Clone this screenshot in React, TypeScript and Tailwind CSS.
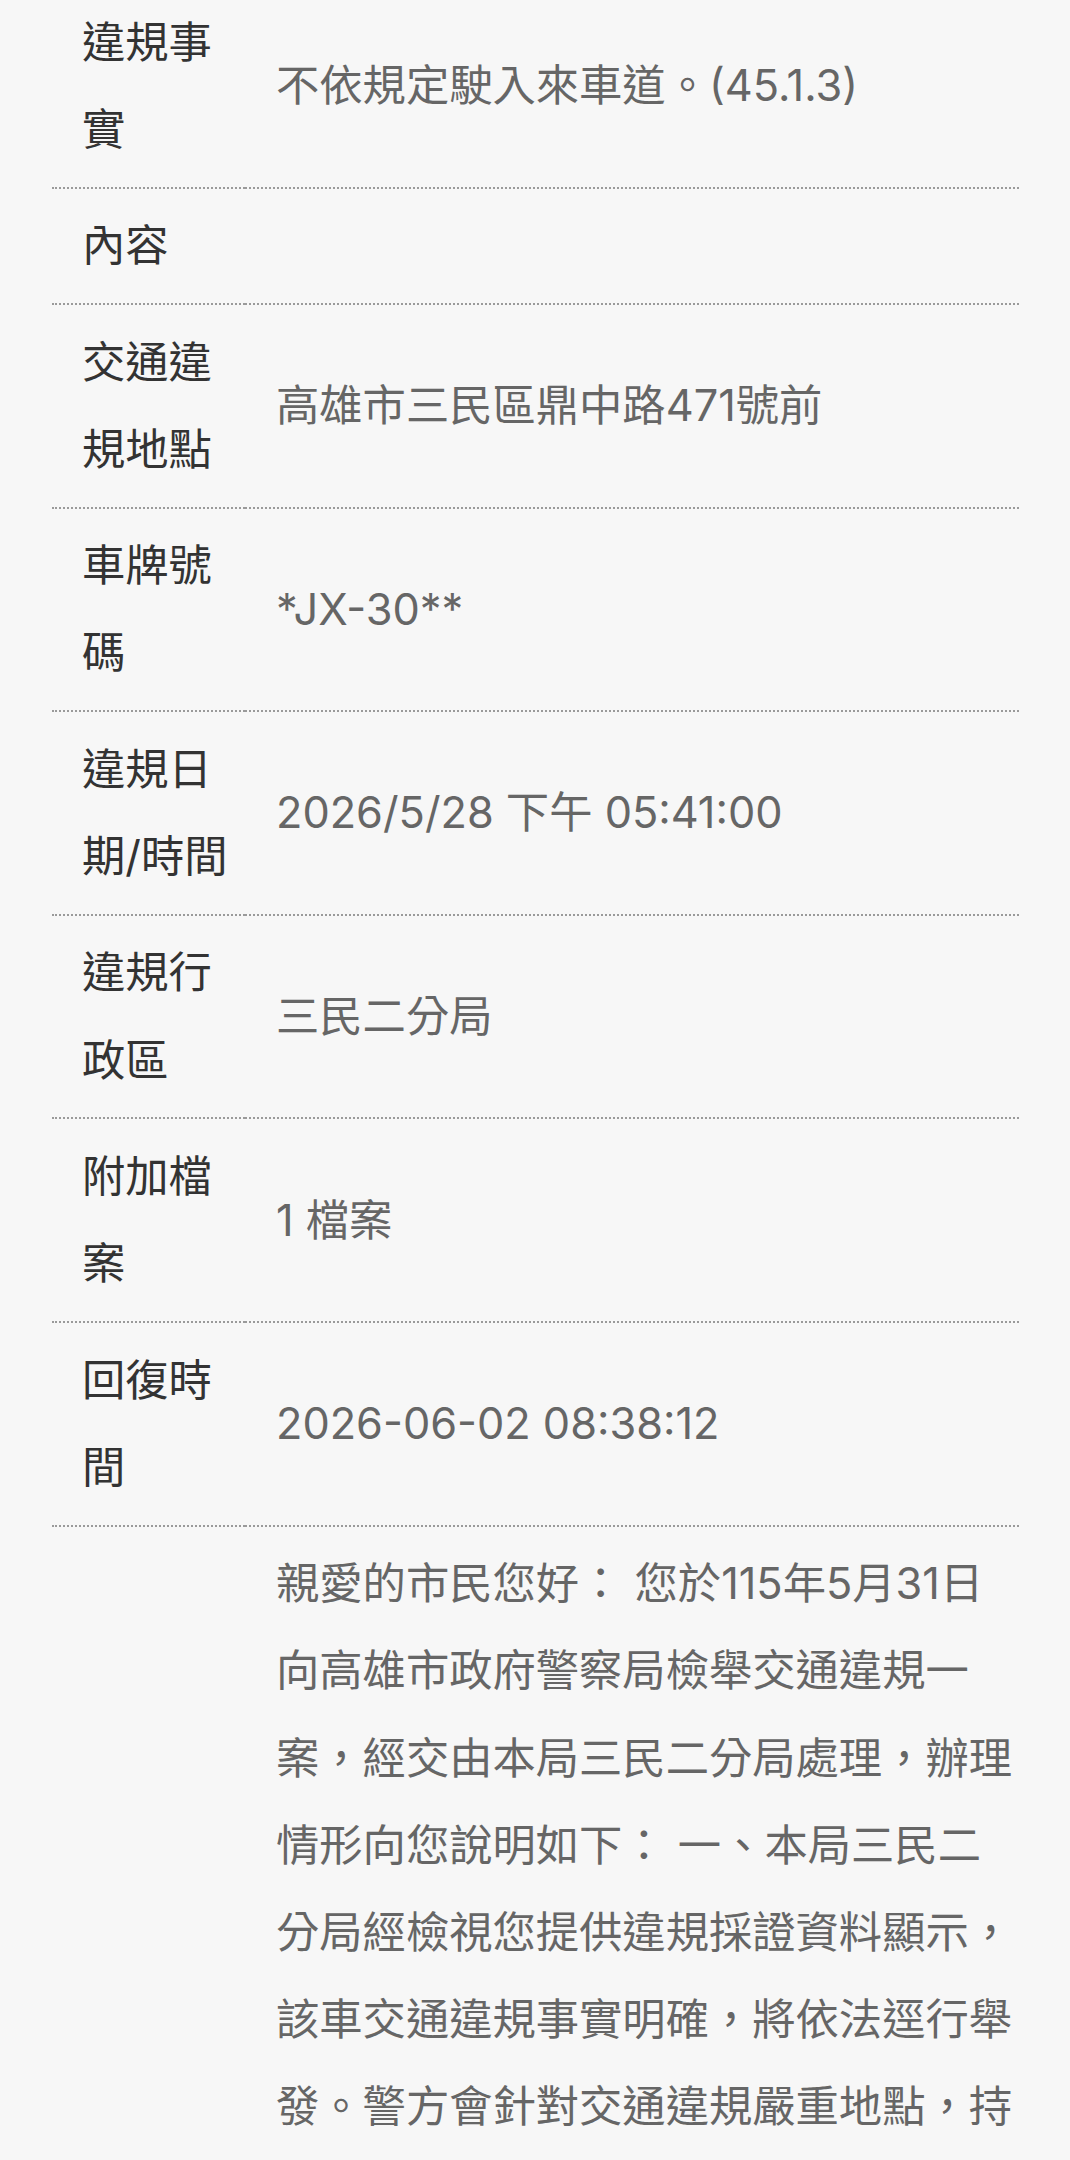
import React from "react";

type Row = {
    label: string;
    value: string;
};

const rows: Row[] = [
    { label: "違規事實", value: "不依規定駛入來車道。(45.1.3)" },
    { label: "內容", value: "" },
    { label: "交通違規地點", value: "高雄市三民區鼎中路471號前" },
    { label: "車牌號碼", value: "*JX-30**" },
    { label: "違規日期/時間", value: "2026/5/28 下午 05:41:00" },
    { label: "違規行政區", value: "三民二分局" },
    { label: "附加檔案", value: "1 檔案" },
    { label: "回復時間", value: "2026-06-02 08:38:12" },
];

const reply =
    "親愛的市民您好： 您於115年5月31日向高雄市政府警察局檢舉交通違規一案，經交由本局三民二分局處理，辦理情形向您說明如下： 一、本局三民二分局經檢視您提供違規採證資料顯示，該車交通違規事實明確，將依法逕行舉發。警方會針對交通違規嚴重地點，持續加強執法。";

const App: React.FC = () => {
    return (
        <div className="h-[2160px] overflow-hidden bg-[#f7f7f7] font-['Inter','Noto_Sans_CJK_TC',sans-serif] text-[43.3px] leading-[87.2px]">
            <table className="mt-[-15px] ml-[52px] w-[967px] table-fixed border-separate border-spacing-0">
                <colgroup>
                    <col className="w-[193px]" />
                    <col />
                </colgroup>
                <tbody>
                    {rows.map((row) => (
                        <tr key={row.label}>
                            {/* label */}
                            <td className="border-b-2 border-dotted border-[#9a9a9a] py-[13.6px] pl-[30px] pr-[15px] align-top text-[#333333]">
                                {row.label}
                            </td>
                            {/* value */}
                            <td className="border-b-2 border-dotted border-[#9a9a9a] py-[13.6px] pl-[31px] pr-[4px] align-middle text-[#666666]">
                                {row.value}
                            </td>
                        </tr>
                    ))}

                    {/* reply body */}
                    <tr>
                        <td className="py-[13.6px] pl-[30px] pr-[15px]"></td>
                        <td className="py-[13.6px] pl-[31px] pr-[4px] align-top text-[#666666]">
                            {reply}
                        </td>
                    </tr>
                </tbody>
            </table>
        </div>
    );
};

export default App;
